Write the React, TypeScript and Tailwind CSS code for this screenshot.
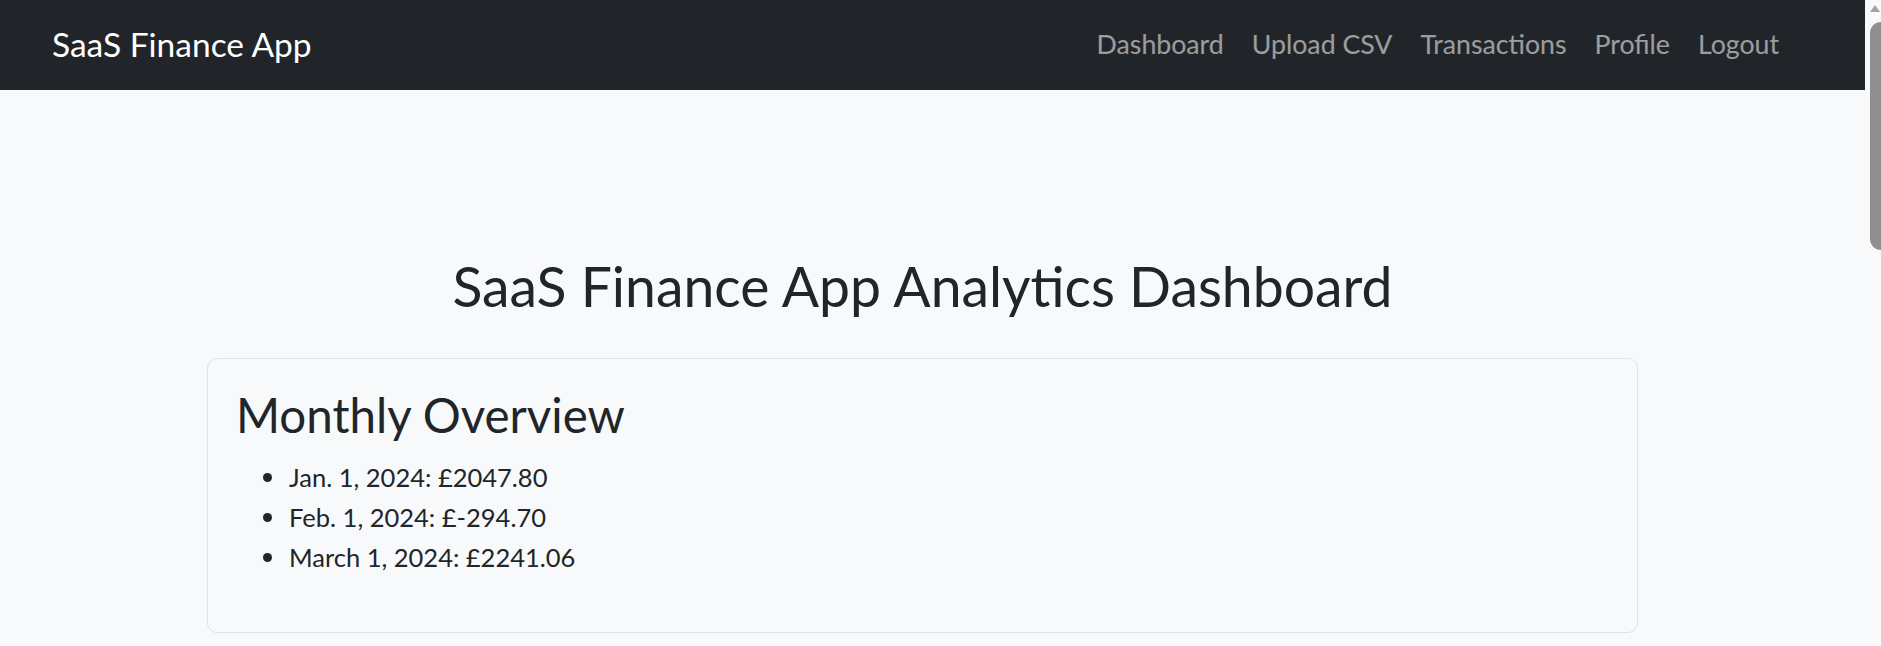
const links = ["Dashboard", "Upload CSV", "Transactions", "Profile", "Logout"];

const months = [
  "Jan. 1, 2024: £2047.80",
  "Feb. 1, 2024: £-294.70",
  "March 1, 2024: £2241.06",
];

function Navbar() {
  return (
    <nav className="flex h-[90px] items-center justify-between bg-[#212529] pb-[1px] pl-[52px] pr-[86px]">
      <a href="#" className="text-[33.5px] leading-[1.2] text-white">
        SaaS Finance App
      </a>
      <ul className="flex gap-[28px] text-[26.7px] leading-[1.2] text-white/55">
        {links.map((l) => (
          <li key={l}>
            <a href="#">{l}</a>
          </li>
        ))}
      </ul>
    </nav>
  );
}

function Scrollbar() {
  return (
    <div className="flex w-[16px] flex-col items-end bg-[#f8f9fa]">
      <div className="mr-[1px] mt-[5px] h-0 w-0 border-x-[5px] border-b-[7px] border-x-transparent border-b-[#a3a3a3]" />
      <div className="mt-[10px] h-[228px] w-[11px] rounded-l-full bg-[#8f8f8f]" />
    </div>
  );
}

function MonthlyOverview() {
  return (
    <section className="mt-[39px] rounded-[10px] border border-[#dee2e6] pb-[55px] pl-[28px] pt-[27px]">
      <h2 className="text-[47.5px] leading-[1.2]">Monthly Overview</h2>
      <ul className="mt-[14px]">
        {months.map((m) => (
          <li key={m} className="flex h-[40px] items-center text-[25.5px] leading-[40px]">
            <span className="ml-[27px] mr-[17px] h-[9px] w-[9px] rounded-full bg-[#212529]" />
            {m}
          </li>
        ))}
      </ul>
    </section>
  );
}

export default function App() {
  return (
    <div
      className="flex h-[646px] w-[1881px] overflow-hidden bg-[#f8f9fa] text-[#212529]"
      style={{ fontFamily: "Lato, 'Open Sans', sans-serif" }}
    >
      <div className="flex-1">
        <Navbar />
        <main className="ml-[207px] w-[1431px] pt-[163px]">
          <h1 className="text-center text-[55.3px] leading-[1.2]">SaaS Finance App Analytics Dashboard</h1>
          <MonthlyOverview />
        </main>
      </div>
      <Scrollbar />
    </div>
  );
}
